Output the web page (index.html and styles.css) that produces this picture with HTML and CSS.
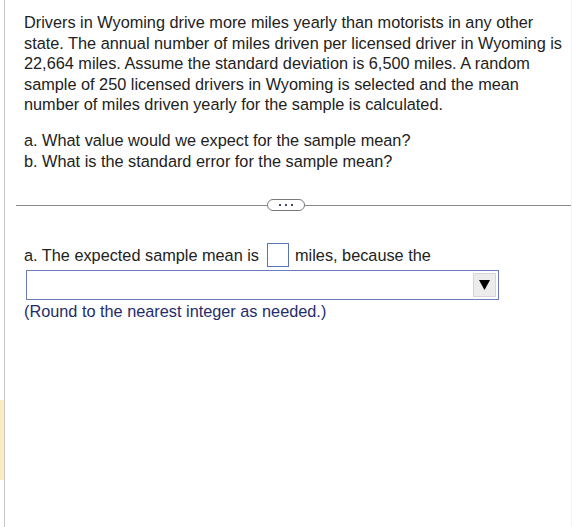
FILE: index.html
```html
<!DOCTYPE html>
<html>
<head>
<meta charset="utf-8">
<link rel="stylesheet" href="styles.css">
</head>
<body>
<div class="page">
  <div class="rail"><div class="rail-space"></div><div class="rail-mark"></div></div>
  <div class="main">
    <p class="q">Drivers in Wyoming drive more miles yearly than motorists in any other<br>state. The annual number of miles driven per licensed driver in Wyoming is<br>22,664 miles. Assume the standard deviation is 6,500 miles. A random<br>sample of 250 licensed drivers in Wyoming is selected and the mean<br>number of miles driven yearly for the sample is calculated.</p>
    <p class="q parts">a. What value would we expect for the sample mean?<br>b. What is the standard error for the sample mean?</p>
    <div class="sep">
      <div class="sep-line short"></div>
      <div class="pill"><span></span><span></span><span></span></div>
      <div class="sep-line"></div>
    </div>
    <div class="answer">
      <div class="row">a. The expected sample mean is <span class="box"></span> miles, because the</div>
      <div class="select"><div class="arrow"><svg width="11" height="10" viewBox="0 0 11 10"><polygon points="0,0 11,0 5.5,10" fill="#000"/></svg></div></div>
      <div class="note">(Round to the nearest integer as needed.)</div>
    </div>
  </div>
</div>
</body>
</html>
```
FILE: styles.css
```css
html, body { margin: 0; padding: 0; background: #fff; }
body { font-family: "Liberation Sans", Arial, sans-serif; font-size: 16.3px; color: #222; }
.page { display: flex; height: 527px; overflow: hidden; }
.rail { width: 4px; display: flex; flex-direction: column; border-right: 1px solid #c8c8c8; }
.rail-space { height: 400px; }
.rail-mark { height: 80px; background: #fbecc0; }
.main { flex: 1; padding: 12px 0 0 19px; border-right: 1px solid #f2f2f2; }
.q { margin: 0; line-height: 20.5px; white-space: nowrap; }
.parts { margin-top: 15.5px; }
.sep { display: flex; align-items: center; margin: 28px 0 0 -8px; height: 12px; }
.sep-line { flex: 1; height: 1px; background: #8a8a8a; }
.sep-line.short { flex: 0 0 251px; }
.pill { width: 36px; height: 10px; border: 1px solid #7a7a7a; border-radius: 6px; display: flex; align-items: center; justify-content: center; gap: 4px; }
.pill span { width: 2px; height: 2px; background: #3a4a6a; }
.answer { margin-top: 32px; }
.row { line-height: 24px; height: 24px; display: flex; align-items: center; white-space: pre; }
.box { display: inline-block; width: 20px; height: 22px; border: 1px solid #5b74b8; margin: 0 2px 0 3px; }
.select { margin: 3px 0 0 2px; width: 469px; height: 28px; border: 1px solid #6b7cc0; display: flex; justify-content: flex-end; align-items: center; padding-right: 2px; }
.arrow { width: 21px; height: 22px; background: #ececec; border: 1px solid #d6d6d6; display: flex; align-items: center; justify-content: center; }
.note { color: #1f2d6b; margin-top: 1px; line-height: 20px; }
```
